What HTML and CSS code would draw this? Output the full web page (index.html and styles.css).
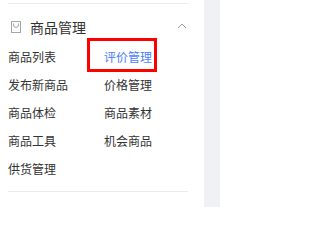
FILE: index.html
```html
<!DOCTYPE html>
<html lang="zh">
<head>
<meta charset="utf-8">
<link rel="stylesheet" href="styles.css">
</head>
<body>
<div class="page">
  <div class="panel">
    <div class="rule"></div>
    <div class="header">
      <svg class="bag" width="10" height="12" viewBox="0 0 10 12">
        <rect x="0.5" y="0.5" width="9" height="11" fill="none" stroke="#a6a6a6" stroke-width="1"/>
        <path d="M2.5 2.5 V4 Q2.5 6.5 5 6.5 Q7.5 6.5 7.5 4 V2.5" fill="none" stroke="#a6a6a6" stroke-width="1"/>
      </svg>
      <span class="title">商品管理</span>
      <svg class="chevron" width="10" height="6" viewBox="0 0 10 6">
        <polyline points="1,5 5,1 9,5" fill="none" stroke="#9a9a9a" stroke-width="1"/>
      </svg>
    </div>
    <div class="grid">
      <span class="item">商品列表</span>
      <span class="item active">评价管理</span>
      <span class="item">发布新商品</span>
      <span class="item">价格管理</span>
      <span class="item">商品体检</span>
      <span class="item">商品素材</span>
      <span class="item">商品工具</span>
      <span class="item">机会商品</span>
      <span class="item">供货管理</span>
    </div>
    <div class="rule bottom"></div>
  </div>
  <div class="strip"></div>
  <div class="rest"></div>
</div>
</body>
</html>
```
FILE: styles.css
```css
html, body {
  margin: 0;
  padding: 0;
  background: #ffffff;
}
.page {
  display: flex;
  width: 230px;
  height: 207px;
  font-family: "Noto Sans CJK SC", "Noto Sans", sans-serif;
  color: #333333;
}
.panel {
  width: 204px;
  box-sizing: border-box;
  padding: 3px 16px 0 8px;
  background: #ffffff;
}
.strip {
  width: 16px;
  background: #f0f1f5;
}
.rest {
  flex: 1;
  background: #ffffff;
}
.rule {
  height: 1px;
  background: #ebebeb;
}
.rule.bottom {
  margin-top: 14px;
}
.header {
  height: 45px;
  display: flex;
  align-items: center;
  padding-left: 3px;
}
.bag {
  display: block;
  margin-right: 9px;
}
.title {
  font-size: 14px;
  line-height: 16px;
  flex: 1;
}
.chevron {
  display: block;
  margin-right: 1px;
  margin-top: -1px;
}
.grid {
  display: grid;
  grid-template-columns: 96px 1fr;
  row-gap: 12px;
}
.item {
  font-size: 12px;
  line-height: 16px;
  white-space: nowrap;
  position: relative;
}
.item.active {
  color: #4c7dfa;
}
.item.active::after {
  content: "";
  position: absolute;
  left: -17px;
  top: -11px;
  width: 70px;
  height: 34px;
  border: 3px solid #ff0000;
  box-sizing: border-box;
}
```
